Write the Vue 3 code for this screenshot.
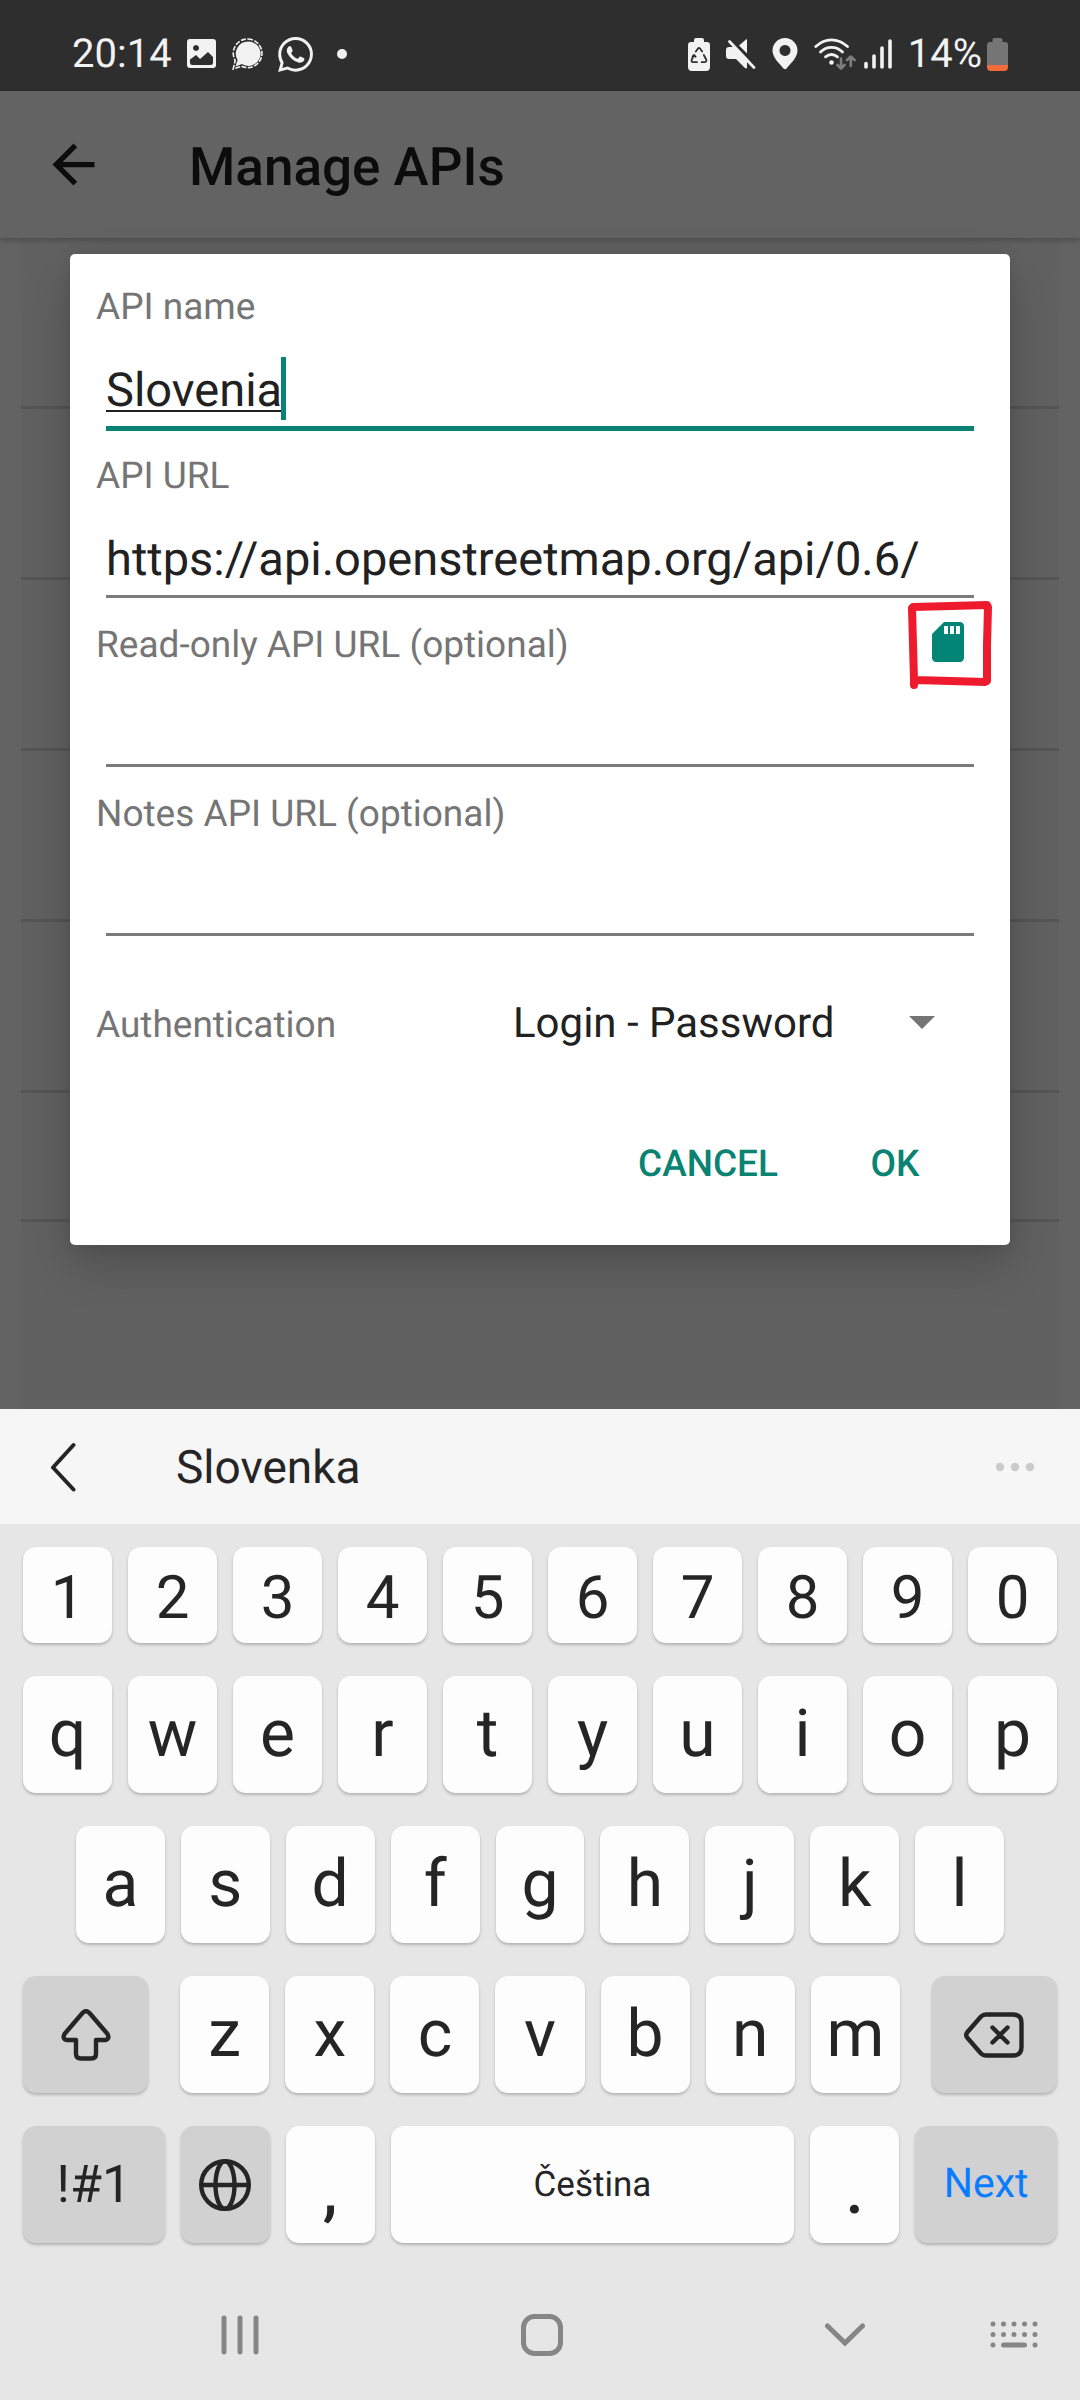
<script setup>
import { ref } from 'vue'

const fields = ref([
  { id: 'api-name', label: 'API name', value: 'Slovenia', active: true },
  { id: 'api-url', label: 'API URL', value: 'https://api.openstreetmap.org/api/0.6/' },
  { id: 'readonly-url', label: 'Read-only API URL (optional)', value: '', picker: true },
  { id: 'notes-url', label: 'Notes API URL (optional)', value: '' },
])
const auth = ref('Login - Password')

const digits = '1234567890'.split('')
const topRow = 'qwertyuiop'.split('')
const homeRow = 'asdfghjkl'.split('')
const bottomRow = 'zxcvbnm'.split('')
</script>

<template>
  <div class="screen">
    <header class="status">
      <div class="status-side left">
        <span class="clock">20:14</span>
        <svg width="30" height="30" viewBox="0 0 30 30" aria-hidden="true">
          <path fill="#f2f2f2" fill-rule="evenodd" d="M3 0h23a3 3 0 0 1 3 3v23a3 3 0 0 1-3 3H3a3 3 0 0 1-3-3V3a3 3 0 0 1 3-3zM9 6a3 3 0 1 0 .01 0zM3 20.500v3q0 2.500 2.500 2.500h18q2.500 0 2.500-2.500V18l-5-5-8 7-4-4z" />
        </svg>
        <svg width="31" height="32" viewBox="0 0 31 32" aria-hidden="true">
          <path fill="#f2f2f2" d="M16 3.500a12.200 12.200 0 1 1-6 22.600L3.500 28.500 5.600 22A12.200 12.200 0 0 1 16 3.500z" />
          <path fill="none" stroke="#f2f2f2" stroke-width="1.600" stroke-dasharray="5 1.500" d="M16 1a14.300 14.300 0 1 1-6.500 27.200L1.200 31l2-8.500A14.300 14.300 0 0 1 16 1z" />
        </svg>
        <svg width="35" height="35" viewBox="0 0 24 24" aria-hidden="true">
          <path fill="#f2f2f2" d="M17.472 14.382c-.297-.149-1.758-.867-2.030-.967-.273-.099-.471-.148-.670.150-.197.297-.767.966-.940 1.164-.173.199-.347.223-.644.075-.297-.150-1.255-.463-2.390-1.475-.883-.788-1.480-1.761-1.653-2.059-.173-.297-.018-.458.130-.606.134-.133.298-.347.446-.520.149-.174.198-.298.298-.497.099-.198.050-.371-.025-.520-.075-.149-.669-1.612-.916-2.207-.242-.579-.487-.500-.669-.510-.173-.008-.371-.010-.570-.010-.198 0-.520.074-.792.372-.272.297-1.040 1.016-1.040 2.479 0 1.462 1.065 2.875 1.213 3.074.149.198 2.096 3.200 5.077 4.487.709.306 1.262.489 1.694.625.712.227 1.360.195 1.871.118.571-.085 1.758-.719 2.006-1.413.248-.694.248-1.289.173-1.413-.074-.124-.272-.198-.570-.347m-5.421 7.403h-.004a9.870 9.870 0 0 1-5.031-1.378l-.361-.214-3.741.982.998-3.648-.235-.374a9.860 9.860 0 0 1-1.510-5.260c.001-5.450 4.436-9.884 9.888-9.884 2.640 0 5.122 1.030 6.988 2.898a9.825 9.825 0 0 1 2.893 6.994c-.003 5.450-4.437 9.884-9.885 9.884m8.413-18.297A11.815 11.815 0 0 0 12.050 0C5.495 0 .160 5.335.157 11.892c0 2.096.547 4.142 1.588 5.945L.057 24l6.305-1.654a11.882 11.882 0 0 0 5.683 1.448h.005c6.554 0 11.890-5.335 11.893-11.893a11.821 11.821 0 0 0-3.480-8.413z" />
        </svg>
        <span class="more-dot"></span>
      </div>
      <div class="status-side right">
        <svg width="22" height="33" viewBox="0 0 22 33" aria-hidden="true">
          <path fill="#f2f2f2" d="M8 0h6q2 0 2 2v2h3q3 0 3 3v22q0 4-4 4H4q-4 0-4-4V7q0-3 3-3h3V2q0-2 2-2z" />
          <path fill="none" stroke="#2e2e2e" stroke-width="1.800" stroke-linecap="round" stroke-linejoin="round" d="M7.800 13.500 10 10.500q1-1.200 2 0l2.200 3M15.800 17l2.400 4.500q.8 2.500-1.500 2.700h-3M9 24.200H5q-2-.2-1.200-2.700L6 17M4.500 18.500 6.200 17l1.400 1.800" />
        </svg>
        <svg width="30" height="32" viewBox="0 0 30 32" aria-hidden="true">
          <path fill="#f2f2f2" d="M21 1v14.500L13 7.500 20 1.500zM3 9h5l13 13v8q-1 .8-2 0l-9-9H3q-3 0-3-3v-6q0-3 3-3z" />
          <path stroke="#2e2e2e" stroke-width="2" d="M6 2.500 29 26" />
          <path stroke="#f2f2f2" stroke-width="2.800" stroke-linecap="round" d="M3.500 3.500 28 29.500" />
        </svg>
        <svg width="26" height="32" viewBox="0 0 26 32" aria-hidden="true">
          <path fill="#f2f2f2" fill-rule="evenodd" d="M13 0a12.500 12.500 0 0 1 12.500 12.500C25.500 20 18 26 14.500 30.500q-1.500 1.500-3 0C8 26 .5 20 .5 12.500A12.500 12.500 0 0 1 13 0zm0 7a5.500 5.500 0 1 0 .01 0z" />
        </svg>
        <div class="signals">
          <svg width="42" height="32" viewBox="0 0 42 32" aria-hidden="true">
            <g fill="none" stroke="#f2f2f2" stroke-width="2.800" stroke-linecap="round">
              <path d="M1.800 8.500Q9 1.800 17.500 1.800T33.500 8.500" />
              <path d="M6.500 14Q11 9.300 17.500 9.300T28.500 14" />
              <path d="M11.500 18.800q6-4.600 12 0" />
            </g>
            <circle cx="17.500" cy="24.500" r="2.300" fill="#f2f2f2" />
            <path fill="none" stroke="#7d7d7d" stroke-width="2.600" stroke-linecap="round" stroke-linejoin="round" d="M27 20.500V30M23.500 27l3.500 3.500 3.500-3.500M36.800 28v-9M33 22l3.800-3.500 3.700 3.500" />
          </svg>
          <svg width="28" height="30" viewBox="0 0 28 30" aria-hidden="true">
            <path stroke="#f2f2f2" stroke-width="3.600" stroke-linecap="round" d="M2 24.500v3.500M10 17v11M18 9v19M26 2v26" />
          </svg>
        </div>
        <div class="battery">
          <span>14%</span>
          <svg width="21" height="33" viewBox="0 0 21 33" aria-hidden="true">
            <path fill="#757575" d="M7.500 0h6q2 0 2 2v2H18q3 0 3 3v20H0V7q0-3 3-3h2.500V2q0-2 2-2z" />
            <path fill="#f26b3c" d="M0 27h21v2q0 4-4 4H4q-4 0-4-4z" />
          </svg>
        </div>
      </div>
    </header>

    <div class="appbar">
      <button class="back" type="button" aria-label="Back">
        <svg width="63" height="63" viewBox="0 0 24 24"><path fill="#0c0c0c" d="M20 11H7.830l5.590-5.590L12 4l-8 8 8 8 1.410-1.410L7.830 13H20v-2z" /></svg>
      </button>
      <h1>Manage APIs</h1>
    </div>

    <main class="stage">
      <ul class="rows" aria-hidden="true">
        <li v-for="n in 6" :key="n"></li>
      </ul>

      <form class="dialog" role="dialog" aria-label="Manage APIs" @submit.prevent>
        <div v-for="f in fields" :key="f.id" class="field" :class="{ active: f.active }">
          <label :for="f.id">{{ f.label }}</label>
          <input :id="f.id" v-model="f.value" type="text" spellcheck="false" />
          <span v-if="f.active" class="caret"></span>
          <template v-if="f.picker">
            <button class="picker" type="button" aria-label="Choose file">
              <svg width="48" height="48" viewBox="0 0 24 24"><path fill="#028577" d="M18 2h-8L4.020 8 4 20c0 1.100.9 2 2 2h12c1.100 0 2-.9 2-2V4c0-1.100-.9-2-2-2zm-6 6h-2V4h2v4zm3 0h-2V4h2v4zm3 0h-2V4h2v4z" /></svg>
            </button>
            <svg class="marker" width="88" height="90" viewBox="0 0 88 90" aria-hidden="true">
              <path fill="none" stroke="#ed1b2d" stroke-width="8" stroke-linecap="round" stroke-linejoin="round" d="M8 85 8 80 6 8 7 7 45 6 81 5 82 7 81 45 81 81 79 82 45 81 9 80" />
            </svg>
          </template>
        </div>

        <div class="auth">
          <label for="auth">Authentication</label>
          <div class="select">
            <select id="auth" v-model="auth">
              <option>Login - Password</option>
            </select>
            <svg width="26" height="13" viewBox="0 0 26 13" aria-hidden="true"><path fill="#757575" d="M0 0h26L13 13z" /></svg>
          </div>
        </div>

        <div class="actions">
          <button type="button">CANCEL</button>
          <button type="submit">OK</button>
        </div>
      </form>
    </main>

    <section class="keyboard" aria-label="Keyboard">
      <div class="suggest">
        <button type="button" aria-label="Collapse">
          <svg width="26" height="50" viewBox="0 0 26 50"><path fill="none" stroke="#252525" stroke-width="4" stroke-linecap="round" stroke-linejoin="round" d="M23.500 3 3 25.500l20.500 22" /></svg>
        </button>
        <button class="word" type="button">Slovenka</button>
        <button type="button" aria-label="More">
          <svg width="40" height="10" viewBox="0 0 40 10" fill="#cbcbcb"><circle cx="5" cy="5" r="4.200" /><circle cx="20" cy="5" r="4.200" /><circle cx="35" cy="5" r="4.200" /></svg>
        </button>
      </div>

      <div class="keys">
        <div class="row digits">
          <button v-for="k in digits" :key="k" type="button" class="key">{{ k }}</button>
        </div>
        <div class="row">
          <button v-for="k in topRow" :key="k" type="button" class="key">{{ k }}</button>
        </div>
        <div class="row inset">
          <button v-for="k in homeRow" :key="k" type="button" class="key">{{ k }}</button>
        </div>
        <div class="row">
          <button type="button" class="key dark shift" aria-label="Shift">
            <svg width="50" height="52" viewBox="0 0 50 52"><path fill="none" stroke="#252525" stroke-width="4.400" stroke-linejoin="round" d="M21.500 4q3.500-3.500 7 0L46.500 25q2.500 5-2 6H35v14q0 4.500-4.500 4.500h-11Q15 49.500 15 45V31H5.500q-4.500-1-2-6z" /></svg>
          </button>
          <i></i>
          <button v-for="k in bottomRow" :key="k" type="button" class="key">{{ k }}</button>
          <i></i>
          <button type="button" class="key dark shift" aria-label="Backspace">
            <svg width="60" height="46" viewBox="0 0 60 46"><path fill="none" stroke="#252525" stroke-width="4.400" stroke-linecap="round" stroke-linejoin="round" d="M22 2.500h27q8.500 0 8.500 8.500v24q0 8.500-8.500 8.500H22q-3 0-5-2L3.500 26q-2.500-3 0-6L17 4.500q2-2 5-2zM28.500 15.500l15 15M43.500 15.500l-15 15" /></svg>
          </button>
        </div>
        <div class="row">
          <button type="button" class="key dark wide symbols">!#1</button>
          <button type="button" class="key dark" aria-label="Language">
            <svg width="52" height="52" viewBox="0 0 52 52"><g fill="none" stroke="#252525" stroke-width="4.400"><circle cx="26" cy="26" r="23.800" /><ellipse cx="26" cy="26" rx="9.500" ry="23.800" /><path d="M2 26h48" /></g></svg>
          </button>
          <button type="button" class="key punct">,</button>
          <button type="button" class="key space">Čeština</button>
          <button type="button" class="key punct">.</button>
          <button type="button" class="key dark wide next">Next</button>
        </div>
      </div>

      <nav class="nav">
        <button type="button" aria-label="Recents">
          <svg width="38" height="40" viewBox="0 0 38 40"><path stroke="#868686" stroke-width="5" stroke-linecap="round" d="M3 3v34M19 3v34M35 3v34" /></svg>
        </button>
        <button type="button" aria-label="Home">
          <svg width="42" height="42" viewBox="0 0 42 42"><rect x="2.500" y="2.500" width="37" height="37" rx="11" fill="none" stroke="#868686" stroke-width="5" /></svg>
        </button>
        <button type="button" aria-label="Hide keyboard">
          <svg width="40" height="24" viewBox="0 0 40 24"><path fill="none" stroke="#868686" stroke-width="5" stroke-linecap="round" d="M2.500 3 20 20 37.500 3" /></svg>
        </button>
        <button type="button" aria-label="Switch keyboard">
          <svg width="48" height="28" viewBox="0 0 48 28"><path stroke="#868686" stroke-width="5" stroke-linecap="round" d="M3 3h.01M13.500 3h.01M24 3h.01M34.500 3h.01M45 3h.01M3 13.500h.01M13.500 13.500h.01M24 13.500h.01M34.500 13.500h.01M45 13.500h.01M3 24h.01M13.500 24h21M45 24h.01" /></svg>
        </button>
      </nav>
    </section>
  </div>
</template>

<style>
body {
  background: #e6e6e6;
}
</style>

<style scoped>
.screen {
  display: flex;
  flex-direction: column;
  min-height: 100vh;
  background: #636363;
  font-family: Roboto, "Liberation Sans", sans-serif;
  text-rendering: geometricPrecision;
  color: #212121;
}
.screen *,
.screen *::before {
  box-sizing: border-box;
}
button,
input,
select {
  margin: 0;
  padding: 0;
  border: 0;
  border-radius: 0;
  background: none;
  color: inherit;
  font: inherit;
  text-rendering: inherit;
  outline: none;
}
svg {
  display: block;
  flex: none;
}

.status {
  display: flex;
  justify-content: space-between;
  align-items: center;
  height: 91px;
  padding: 17px 72px 0 72px;
  background: #2e2e2e;
  color: #f2f2f2;
  font-size: 40px;
  line-height: 48px;
}
.status-side {
  display: flex;
  align-items: center;
}
.left {
  gap: 15px;
}
.right {
  gap: 16px;
}
.more-dot {
  width: 10px;
  height: 10px;
  margin-left: 9px;
  border-radius: 50%;
  background: #f2f2f2;
}
.signals {
  display: flex;
  align-items: center;
  gap: 8px;
}
.battery {
  display: flex;
  align-items: center;
  gap: 5px;
}

.appbar {
  position: relative;
  z-index: 1;
  display: flex;
  align-items: center;
  gap: 84px;
  height: 147px;
  padding: 0 42px;
  box-shadow: 0 2px 6px rgba(0, 0, 0, 0.25);
}
h1 {
  margin: 0;
  padding-top: 4px;
  color: #0c0c0c;
  font-size: 53px;
  line-height: 62px;
  font-weight: 500;
}

.stage {
  display: grid;
}
.stage > * {
  grid-area: 1 / 1;
}
.rows {
  margin: 0 21px;
  padding: 0;
  list-style: none;
  background: #616161;
}
.rows li {
  height: 171px;
  border-bottom: 3px solid #555;
}
.rows li:last-child {
  height: 129px;
}

.dialog {
  position: relative;
  z-index: 2;
  margin: 16px 70px 164px;
  padding: 32px 26px 18px;
  border-radius: 5px;
  background: #fff;
  box-shadow: 0 20px 50px rgba(0, 0, 0, 0.2), 0 0 14px rgba(0, 0, 0, 0.08);
  align-self: start;
}
.field {
  position: relative;
  height: 169px;
  padding: 0 10px;
}
label {
  display: block;
  color: #757575;
  font-size: 37px;
  line-height: 43px;
}
.field label {
  margin-left: -10px;
}
.field input {
  display: block;
  width: 100%;
  height: 100px;
  padding-top: 26px;
  border-bottom: 3px solid #7b7b7b;
  font-size: 47px;
}
.field.active input {
  height: 102px;
  border-bottom: 5px solid #0a8373;
  text-decoration: underline;
  text-decoration-thickness: 2px;
  text-underline-offset: 4px;
}
.caret {
  position: absolute;
  top: 71px;
  left: 185px;
  width: 5px;
  height: 63px;
  background: #0a8373;
}
.picker {
  position: absolute;
  top: -6px;
  right: 12px;
}
.marker {
  position: absolute;
  top: -24px;
  right: -10px;
  pointer-events: none;
}

.auth {
  display: flex;
  align-items: center;
  justify-content: space-between;
  height: 126px;
}
.select {
  position: relative;
  width: 471px;
}
.select select {
  display: block;
  width: 100%;
  height: 64px;
  padding-bottom: 4px;
  appearance: none;
  font-size: 42px;
}
.select svg {
  position: absolute;
  top: 23px;
  right: 49px;
  pointer-events: none;
}
.actions {
  display: flex;
  justify-content: flex-end;
  gap: 12px;
  padding: 13px 5px 0 0;
}
.actions button {
  min-width: 168px;
  height: 126px;
  padding: 0 21px;
  color: #0a8373;
  font-size: 37px;
  font-weight: 500;
}

.keyboard {
  flex: 1;
  position: relative;
  background: #e6e6e6;
  color: #252525;
}
.suggest {
  display: flex;
  align-items: center;
  height: 115px;
  padding: 0 45px 0 50px;
  background: #f6f6f6;
}
.word {
  flex: 1;
  padding: 3px 0 0 100px;
  font-size: 46px;
  text-align: left;
}
.keys {
  display: flex;
  flex-direction: column;
  gap: 33px;
  padding: 23px 23px 0;
}
.row {
  display: flex;
  gap: 16px;
  height: 117px;
}
.row i {
  width: 0;
}
.inset {
  padding: 0 53px;
}
.key {
  display: flex;
  flex: 89 1 0;
  align-items: center;
  justify-content: center;
  min-width: 0;
  border-radius: 13px;
  background: #fdfdfd;
  box-shadow: 0 2px 3px rgba(0, 0, 0, 0.22);
  font-size: 66px;
  line-height: 77px;
}
.digits {
  height: 96px;
}
.digits .key {
  padding-top: 4px;
  font-size: 60px;
}
.dark {
  background: #d1d1d1;
}
.shift {
  flex-grow: 125;
}
.wide {
  flex-grow: 142;
}
.space {
  flex-grow: 404;
  font-size: 35px;
}
.symbols {
  font-size: 52px;
}
.next {
  color: #0a7cff;
  font-size: 41px;
}
.punct {
  padding-top: 14px;
  font-weight: 500;
}
.nav {
  display: grid;
  grid-template-columns: repeat(3, 1fr) 36px;
  height: 157px;
  padding: 27px 48px 0 89px;
}
.nav button {
  display: flex;
  align-items: center;
  justify-content: center;
}
</style>
